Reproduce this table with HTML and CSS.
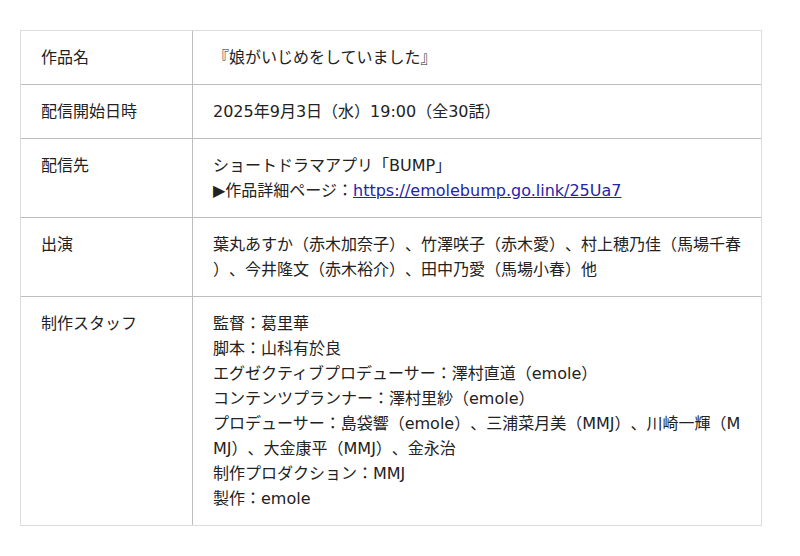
FILE: index.html
```html
<!DOCTYPE html>
<html lang="ja">
<head>
<meta charset="utf-8">
<link rel="stylesheet" href="styles.css">
</head>
<body>
<table class="info">
  <tr>
    <th>作品名</th>
    <td>『娘がいじめをしていました』</td>
  </tr>
  <tr>
    <th>配信開始日時</th>
    <td>2025年9月3日（水）19:00（全30話）</td>
  </tr>
  <tr>
    <th>配信先</th>
    <td>ショートドラマアプリ「BUMP」<br>▶作品詳細ページ：<a href="#">https://emolebump.go.link/25Ua7</a></td>
  </tr>
  <tr>
    <th>出演</th>
    <td>葉丸あすか（赤木加奈子）、竹澤咲子（赤木愛）、村上穂乃佳（馬場千春）、今井隆文（赤木裕介）、田中乃愛（馬場小春）他</td>
  </tr>
  <tr>
    <th>制作スタッフ</th>
    <td>監督：葛里華<br>脚本：山科有於良<br>エグゼクティブプロデューサー：澤村直道（emole）<br>コンテンツプランナー：澤村里紗（emole）<br>プロデューサー：島袋響（emole）、三浦菜月美（MMJ）、川崎一輝（MMJ）、大金康平（MMJ）、金永治<br>制作プロダクション：MMJ<br>製作：emole</td>
  </tr>
</table>
</body>
</html>
```
FILE: styles.css
```css
html, body {
  margin: 0;
  padding: 0;
  background: #fff;
}
body {
  padding: 30px 20px;
  font-family: "DejaVu Sans", "Noto Sans CJK JP", sans-serif;
  font-size: 16px;
  line-height: 25px;
  color: #222;
  text-spacing-trim: space-all;
}
.info {
  width: 742px;
  border-collapse: separate;
  border-spacing: 0;
  border: 1px solid #dcdcdc;
  table-layout: fixed;
}
.info th,
.info td {
  padding: 14px 20px;
  text-align: left;
  vertical-align: top;
  font-weight: normal;
  border-top: 1px solid #bdbdbd;
  line-break: anywhere;
  word-break: break-all;
  text-spacing-trim: space-all;
}
.info tr:first-child th,
.info tr:first-child td {
  border-top: none;
}
.info th {
  width: 131px;
}
.info td {
  border-left: 1px solid #bdbdbd;
}
.info a {
  color: #2424a8;
  text-decoration: underline;
}
```
